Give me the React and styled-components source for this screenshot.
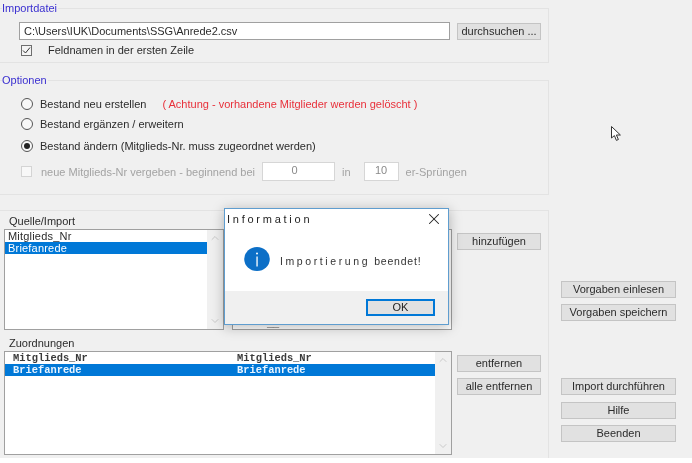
import React from "react";
import styled, { createGlobalStyle } from "styled-components";
import { X, ChevronUp, ChevronDown } from "lucide-react";

const GlobalStyle = createGlobalStyle`
  html, body {
    margin: 0;
    background: #ffffff;
  }
  body {
    font-family: "Liberation Sans", Arial, sans-serif;
    font-size: 11px;
    color: #2b2b2b;
  }
`;

const Page = styled.div`
  position: relative;
  width: 692px;
  height: 458px;
  background: #f0f0f0;
  overflow: hidden;
  display: flex;
  filter: blur(0.35px);
`;

const LeftColumn = styled.div`
  width: 549px;
  flex: none;
  display: flex;
  flex-direction: column;
`;

const RightColumn = styled.div`
  flex: 1;
  display: flex;
  flex-direction: column;
  padding: 281px 0 0 12px;
`;

const Group = styled.fieldset`
  margin: ${(p) => p.$top}px 0 0 -1px;
  padding: 0;
  height: ${(p) => p.$height}px;
  box-sizing: border-box;
  border: 1px solid #e3e3e3;
  min-width: 0;
`;

const Legend = styled.legend`
  margin-left: 2px;
  padding: 0 1px 0 0;
  line-height: 13px;
  font-size: 11px;
  color: #3a2fd0;
`;

const FileRow = styled.div`
  display: flex;
  align-items: center;
  gap: 7px;
  padding: 7px 0 0 19px;
`;

const PathInput = styled.div`
  width: 431px;
  height: 18px;
  box-sizing: border-box;
  background: #ffffff;
  border: 1px solid #a0a0a0;
  padding-left: 4px;
  line-height: 16px;
  font-size: 11px;
`;

const Button = styled.div`
  width: ${(p) => p.$width || 84}px;
  height: 17px;
  box-sizing: border-box;
  flex: none;
  margin-top: ${(p) => p.$top || 0}px;
  background: #e1e1e1;
  border: 1px solid #c4c4c4;
  text-align: center;
  line-height: 15px;
  font-size: 11px;
  color: #2b2b2b;
`;

const CheckRow = styled.div`
  display: flex;
  align-items: center;
  padding: ${(p) => p.$top}px 0 0 21px;
  color: ${(p) => (p.$disabled ? "#a3a3a3" : "#2b2b2b")};
`;

const CheckBox = styled.span`
  width: 11px;
  height: 11px;
  flex: none;
  box-sizing: border-box;
  background: ${(p) => (p.$disabled ? "#f8f8f8" : "#f4f4f4")};
  border: 1px solid ${(p) => (p.$disabled ? "#d4d4d4" : "#6e6e6e")};
  margin-right: ${(p) => p.$gap}px;
  display: flex;
`;

const RadioRow = styled.div`
  display: flex;
  align-items: center;
  height: 14px;
  margin: ${(p) => p.$top}px 0 0 21px;
  white-space: nowrap;
`;

const Radio = styled.span`
  width: 12px;
  height: 12px;
  box-sizing: border-box;
  flex: none;
  margin-right: 7px;
  border: 1px solid #555555;
  border-radius: 50%;
  background: #f8f8f8;
  display: flex;
  align-items: center;
  justify-content: center;
`;

const RadioDot = styled.span`
  width: 6px;
  height: 6px;
  border-radius: 50%;
  background: #222222;
`;

const Warning = styled.span`
  margin-left: 16px;
  color: #e8303a;
`;

const NumberInput = styled.div`
  width: ${(p) => p.$width}px;
  height: 19px;
  flex: none;
  box-sizing: border-box;
  margin: 0 ${(p) => p.$after}px 0 ${(p) => p.$before}px;
  padding-right: ${(p) => p.$shift || 0}px;
  background: #ffffff;
  border: 1px solid #d6d6d6;
  text-align: center;
  line-height: 15px;
  color: #8a8a8a;
`;

const ListsPanel = styled.section`
  margin: 15px 0 0 -1px;
  flex: 1;
  border-top: 1px solid #e3e3e3;
  border-right: 1px solid #e3e3e3;
  padding-left: 5px;
`;

const Caption = styled.div`
  margin: ${(p) => p.$top}px 0 0 5px;
  height: 12px;
  line-height: 12px;
`;

const ListRow = styled.div`
  display: flex;
  margin-top: ${(p) => p.$top || 0}px;
`;

const ListBox = styled.div`
  width: ${(p) => p.$width}px;
  height: ${(p) => p.$height}px;
  flex: none;
  box-sizing: border-box;
  margin-left: ${(p) => p.$left || 0}px;
  background: #ffffff;
  border: 1px solid #a0a0a0;
  display: flex;
`;

const Items = styled.div`
  flex: 1;
  min-width: 0;
`;

const Item = styled.div`
  height: 12px;
  line-height: 12px;
  padding-left: 3px;
  letter-spacing: 0.2px;
  background: ${(p) => (p.$selected ? "#0078d7" : "transparent")};
  color: ${(p) => (p.$selected ? "#ffffff" : "#2b2b2b")};
`;

const MappingItem = styled.div`
  height: 12px;
  line-height: 12px;
  display: grid;
  grid-template-columns: 224px 1fr;
  padding-left: 8px;
  font-family: "Liberation Mono", "Courier New", monospace;
  font-size: 10.4px;
  font-weight: 700;
  background: ${(p) => (p.$selected ? "#0078d7" : "transparent")};
  color: ${(p) => (p.$selected ? "#e8f4ff" : "#3a3a3a")};
`;

const HiddenMark = styled.div`
  height: 100%;
  box-sizing: border-box;
  display: flex;
  align-items: flex-end;
  padding: 0 0 3px 34px;
  font-weight: 700;
  line-height: 8px;
`;

const ScrollBar = styled.div`
  width: 16px;
  flex: none;
  background: #f0f0f0;
  display: flex;
  flex-direction: column;
  justify-content: space-between;
  align-items: center;
  padding: 2px 0;
  color: #bcbcbc;
`;

const ButtonColumn = styled.div`
  display: flex;
  flex-direction: column;
  margin-left: 5px;
  padding-top: ${(p) => p.$top}px;
`;

const Dialog = styled.div`
  position: absolute;
  left: 224px;
  top: 208px;
  width: 225px;
  height: 117px;
  box-sizing: border-box;
  background: #ffffff;
  border: 1px solid #5f9dcf;
  box-shadow: 0 2px 12px rgba(0, 0, 0, 0.28);
  display: flex;
  flex-direction: column;
`;

const DialogTitle = styled.div`
  height: 20px;
  flex: none;
  display: flex;
  align-items: center;
  justify-content: space-between;
  padding: 0 5px 0 2px;
  letter-spacing: 2.75px;
  color: #1f1f1f;
`;

const DialogBody = styled.div`
  flex: 1;
  display: flex;
  align-items: center;
  gap: 10px;
  padding: 0 0 2px 19px;
  font-size: 10.5px;
  white-space: nowrap;
  color: #333333;
`;

const Message = styled.span`
  margin-top: 3px;
`;

const Spaced = styled.span`
  letter-spacing: ${(p) => p.$spacing}px;
  margin-right: ${(p) => p.$after || 0}px;
`;

const DialogFooter = styled.div`
  height: 33px;
  flex: none;
  box-sizing: border-box;
  background: #f0f0f0;
  display: flex;
  justify-content: flex-end;
  padding: 8px 13px 0 0;
`;

const OkButton = styled.div`
  width: 69px;
  height: 17px;
  box-sizing: border-box;
  background: #e1e1e1;
  border: 2px solid #0078d7;
  text-align: center;
  line-height: 13px;
  color: #1f1f1f;
`;

const Pointer = styled.svg`
  position: absolute;
  left: 611px;
  top: 126px;
`;

const InfoSvg = styled.svg`
  flex: none;
`;

const InfoIcon = () => (
  <InfoSvg width="26" height="24" viewBox="0 0 26 24">
    <ellipse cx="13" cy="12" rx="12.8" ry="12" fill="#0c6fc7" />
    <circle cx="13" cy="6.5" r="1" fill="#ffffff" />
    <rect x="12.4" y="9.5" width="1.3" height="10" fill="#ffffff" />
  </InfoSvg>
);

const Scroll = () => (
  <ScrollBar>
    <ChevronUp size={12} strokeWidth={1.5} />
    <ChevronDown size={12} strokeWidth={1.5} />
  </ScrollBar>
);

const mappings = ["Mitglieds_Nr", "Briefanrede"];

export default function App() {
  return (
    <>
      <GlobalStyle />
      <Page>
        <LeftColumn>
          <Group $top={2} $height={61}>
            <Legend>Importdatei</Legend>
            <FileRow>
              <PathInput>C:\Users\IUK\Documents\SSG\Anrede2.csv</PathInput>
              <Button>durchsuchen ...</Button>
            </FileRow>
            <CheckRow $top={4}>
              <CheckBox $gap={16}>
                <svg width="9" height="9" viewBox="0 0 9 9">
                  <path d="M1 4.5 L3.5 7 L8 1.5" fill="none" stroke="#333333" strokeWidth="1" />
                </svg>
              </CheckBox>
              Feldnamen in der ersten Zeile
            </CheckRow>
          </Group>

          <Group $top={11} $height={121}>
            <Legend>Optionen</Legend>
            <RadioRow $top={10}>
              <Radio />
              Bestand neu erstellen
              <Warning>( Achtung - vorhandene Mitglieder werden gelöscht )</Warning>
            </RadioRow>
            <RadioRow $top={6}>
              <Radio />
              Bestand ergänzen / erweitern
            </RadioRow>
            <RadioRow $top={8}>
              <Radio>
                <RadioDot />
              </Radio>
              Bestand ändern (Mitglieds-Nr. muss zugeordnet werden)
            </RadioRow>
            <CheckRow $top={9} $disabled>
              <CheckBox $gap={9} $disabled />
              neue Mitglieds-Nr vergeben - beginnend bei
              <NumberInput $width={73} $before={7} $after={7} $shift={8}>0</NumberInput>
              in
              <NumberInput $width={35} $before={13} $after={7}>10</NumberInput>
              er-Sprüngen
            </CheckRow>
          </Group>

          <ListsPanel>
            <Caption $top={4}>Quelle/Import</Caption>
            <ListRow $top={2}>
              <ListBox $width={220} $height={101}>
                <Items>
                  <Item>Mitglieds_Nr</Item>
                  <Item $selected>Briefanrede</Item>
                </Items>
                <Scroll />
              </ListBox>
              <ListBox $width={220} $height={101} $left={8}>
                <HiddenMark>__</HiddenMark>
              </ListBox>
              <ButtonColumn $top={4}>
                <Button>hinzufügen</Button>
              </ButtonColumn>
            </ListRow>
            <Caption $top={7}>Zuordnungen</Caption>
            <ListRow $top={2}>
              <ListBox $width={448} $height={104}>
                <Items>
                  {mappings.map((name, i) => (
                    <MappingItem key={name} $selected={i === 1}>
                      <span>{name}</span>
                      <span>{name}</span>
                    </MappingItem>
                  ))}
                </Items>
                <Scroll />
              </ListBox>
              <ButtonColumn $top={4}>
                <Button>entfernen</Button>
                <Button $top={6}>alle entfernen</Button>
              </ButtonColumn>
            </ListRow>
          </ListsPanel>
        </LeftColumn>

        <RightColumn>
          <Button $width={115}>Vorgaben einlesen</Button>
          <Button $width={115} $top={6}>Vorgaben speichern</Button>
          <Button $width={115} $top={57}>Import durchführen</Button>
          <Button $width={115} $top={7}>Hilfe</Button>
          <Button $width={115} $top={6}>Beenden</Button>
        </RightColumn>

        <Dialog>
          <DialogTitle>
            Information
            <X size={18} strokeWidth={1.4} color="#222222" />
          </DialogTitle>
          <DialogBody>
            <InfoIcon />
            <Message>
              <Spaced $spacing={2.6} $after={4}>Importierung</Spaced>
              <Spaced $spacing={0.8}>beendet!</Spaced>
            </Message>
          </DialogBody>
          <DialogFooter>
            <OkButton>OK</OkButton>
          </DialogFooter>
        </Dialog>

        <Pointer width="12" height="16" viewBox="0 0 12 16">
          <path d="M0.5 0.5 L0.5 12 L3.4 9.6 L5.4 14.4 L7.4 13.5 L5.4 9 L9.4 9 Z" fill="#ffffff" stroke="#333333" strokeWidth="1" />
        </Pointer>
      </Page>
    </>
  );
}
